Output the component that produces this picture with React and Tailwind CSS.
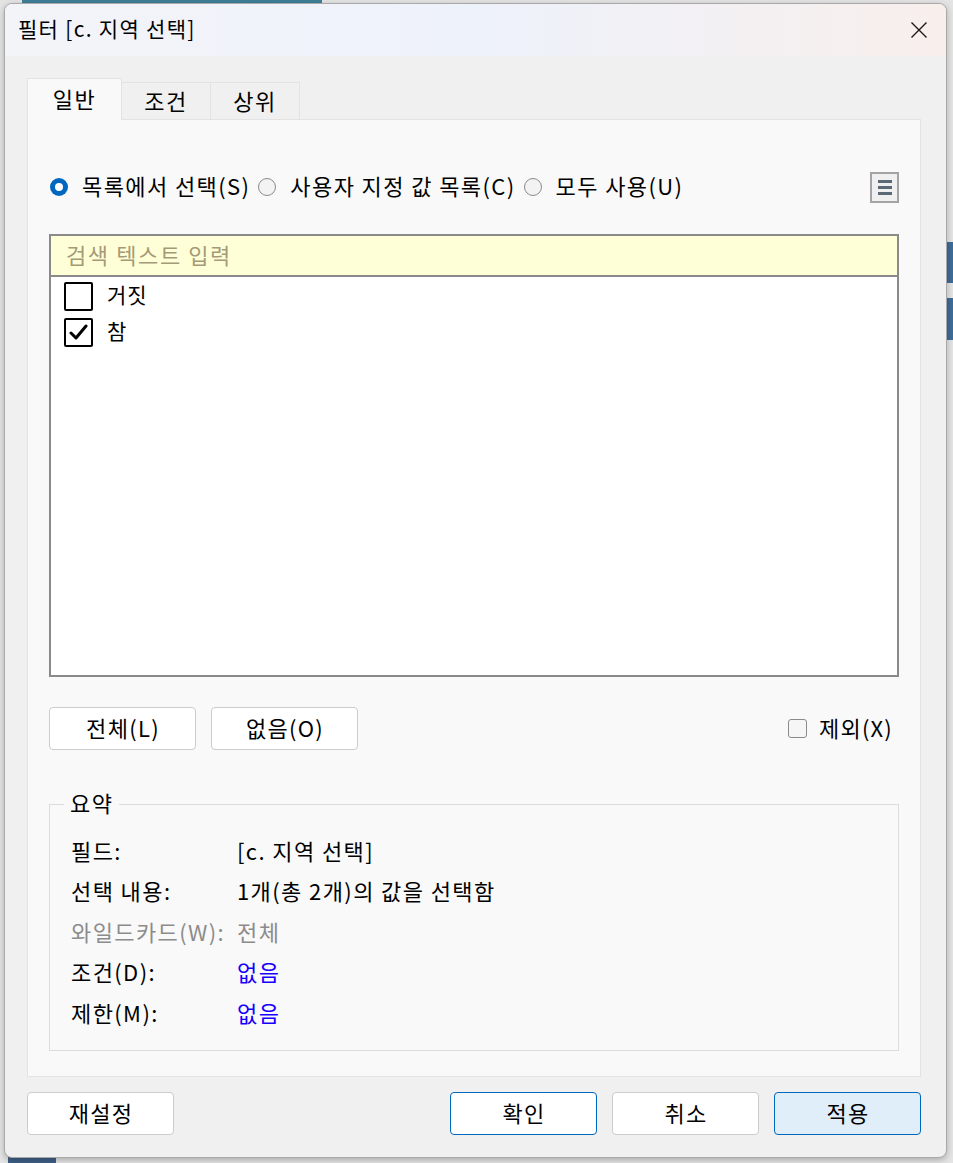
import { useState } from "react";

const FONT = { fontFamily: '"Noto Sans CJK KR", "Noto Sans", sans-serif' };

function Radio({ checked, label }) {
  return (
    <label className="flex items-center">
      {checked ? (
        <span className="flex h-[18px] w-[18px] items-center justify-center rounded-full bg-[#0067c0]">
          <span className="h-[8px] w-[8px] rounded-full bg-white" />
        </span>
      ) : (
        <span className="h-[18px] w-[18px] rounded-full border border-[#8a8a8a] bg-[#f3f3f3]" />
      )}
      <span className="-mt-[3px] ml-[14px] mr-[8px] text-[22px] tracking-[1.4px] text-black">{label}</span>
    </label>
  );
}

function ListCheck({ checked, label }) {
  return (
    <div className="flex h-[36px] items-center pl-[13px]">
      <span className="flex h-[29px] w-[29px] items-center justify-center rounded-[2px] border-2 border-black bg-white">
        {checked ? (
          <svg width="19" height="17" viewBox="0 0 19 17">
            <path d="M2 9 L7 14 L17 2" fill="none" stroke="black" strokeWidth="3" strokeLinecap="round" strokeLinejoin="round" />
          </svg>
        ) : null}
      </span>
      <span className="-mt-[2px] ml-[14px] text-[21px] tracking-[1px] text-black">{label}</span>
    </div>
  );
}

function Btn({ children, primary, active, className = "" }) {
  let cls = "border-[#cccccc] bg-white";
  if (primary) cls = "border-[#0067c0] bg-white";
  if (active) cls = "border-[#0067c0] bg-[#e0eef9]";
  return (
    <button
      type="button"
      className={`flex h-[43px] w-[147px] items-center justify-center rounded-[4px] border pb-[3px] pl-[1px] text-[22px] tracking-[1.3px] text-black ${cls} ${className}`}
    >
      {children}
    </button>
  );
}

const ROWS = [
  { label: "필드:", value: "[c. 지역 선택]", tone: "text-black", vtone: "text-black" },
  { label: "선택 내용:", value: "1개(총 2개)의 값을 선택함", tone: "text-black", vtone: "text-black" },
  { label: "와일드카드(W):", value: "전체", tone: "text-[#8c8c8c]", vtone: "text-[#8c8c8c]" },
  { label: "조건(D):", value: "없음", tone: "text-black", vtone: "text-[#1500ff]" },
  { label: "제한(M):", value: "없음", tone: "text-black", vtone: "text-[#1500ff]" },
];

export default function App() {
  const [tab, setTab] = useState("일반");
  const tabs = ["일반", "조건", "상위"];

  return (
    <div style={FONT} className="relative h-[1163px] w-[953px] overflow-hidden bg-[#e4e4e4]">
      {/* desktop bits behind the dialog */}
      <div className="absolute left-[22px] top-0 h-[4px] w-[300px] bg-[#3f7f98]" />
      <div className="absolute right-0 top-[242px] h-[41px] w-[6px] bg-[#3e6b99]" />
      <div className="absolute right-0 top-[298px] h-[42px] w-[6px] bg-[#3e6b99]" />
      <div className="absolute bottom-0 left-[8px] h-[6px] w-[48px] bg-[#3e5f86]" />

      <div className="relative ml-[4px] mt-[3px] flex h-[1155px] w-[943px] flex-col overflow-hidden rounded-[8px] border border-[#a9a9a9] bg-[#f0f0f0] shadow-[0_2px_6px_rgba(0,0,0,0.25)]">
        {/* title bar */}
        <div className="flex h-[52px] items-center justify-between bg-gradient-to-r from-[#f3f4f8] via-[#eef2fb] to-[#f8efec] pl-[13px] pr-[18px]">
          <span className="-mt-[2px] text-[21px] tracking-[1.3px] text-black">필터 [c. 지역 선택]</span>
          <svg width="18" height="18" viewBox="0 0 18 18">
            <path d="M1.5 1.5 L16.5 16.5 M16.5 1.5 L1.5 16.5" stroke="#1a1a1a" strokeWidth="1.4" />
          </svg>
        </div>

        <div className="flex flex-1 flex-col pl-[22px] pr-[25px] pt-[22px]">
          {/* tabs */}
          <div className="flex h-[41px] items-end">
            {tabs.map((t) => (
              <button
                key={t}
                type="button"
                onClick={() => setTab(t)}
                className={
                  t === tab
                    ? "relative z-10 -mb-px h-[42px] w-[95px] border border-b-0 border-[#e3e3e3] bg-[#f9f9f9] pb-[2px] text-[22px] tracking-[1.4px] text-black"
                    : "h-[37px] w-[89px] border border-l-0 border-b-0 border-[#e3e3e3] bg-[#f0f0f0] pb-[2px] text-[22px] tracking-[1.4px] text-black"
                }
              >
                {t}
              </button>
            ))}
          </div>

          {/* panel */}
          <div className="flex h-[958px] flex-col border border-[#e3e3e3] bg-[#f9f9f9] px-[21px] pt-[51px]">
            <div className="flex h-[32px] items-center">
              <div className="ml-[1px] flex items-center">
                <Radio checked label="목록에서 선택(S)" />
                <Radio label="사용자 지정 값 목록(C)" />
                <Radio label="모두 사용(U)" />
              </div>
              <div className="ml-auto flex h-[31px] w-[29px] flex-col items-center justify-center gap-[3px] border-2 border-[#a3a3a3] bg-[#f0f0f0]">
                <span className="h-[3px] w-[14px] bg-[#5d6977]" />
                <span className="h-[3px] w-[14px] bg-[#5d6977]" />
                <span className="h-[3px] w-[14px] bg-[#5d6977]" />
              </div>
            </div>

            {/* list box */}
            <div className="mt-[31px] flex h-[443px] flex-col border-2 border-[#8a8a8a] bg-white">
              <div className="flex h-[41px] items-center border-b-2 border-[#8a8a8a] bg-[#ffffd7] pb-[3px] pl-[15px] text-[22px] tracking-[1.6px] text-[#a59a78]">
                검색 텍스트 입력
              </div>
              <div className="pt-[1px]">
                <ListCheck label="거짓" />
                <ListCheck checked label="참" />
              </div>
            </div>

            {/* buttons row */}
            <div className="mt-[30px] flex items-center">
              <Btn>전체(L)</Btn>
              <Btn className="ml-[15px]">없음(O)</Btn>
              <label className="ml-auto mr-[6px] flex items-center">
                <span className="h-[19px] w-[19px] rounded-[3px] border border-[#8a8a8a] bg-[#f6f6f6]" />
                <span className="-mt-[3px] ml-[12px] text-[22px] tracking-[1.2px] text-black">제외(X)</span>
              </label>
            </div>

            {/* summary */}
            <div className="relative mt-[54px] h-[247px] border border-[#dcdcdc] pl-[21px] pt-[25px]">
              <span className="absolute -top-[17px] left-[14px] bg-[#f9f9f9] px-[6px] text-[22px] leading-[28px] tracking-[1.4px] text-black">
                요약
              </span>
              {ROWS.map((r) => (
                <div key={r.label} className="flex h-[40.5px] items-center text-[22px] tracking-[1.4px]">
                  <span className={`w-[166px] ${r.tone}`}>{r.label}</span>
                  <span className={r.vtone}>{r.value}</span>
                </div>
              ))}
            </div>
          </div>

          {/* footer */}
          <div className="mt-[15px] flex items-center">
            <Btn>재설정</Btn>
            <div className="ml-auto flex gap-[15px]">
              <Btn primary>확인</Btn>
              <Btn>취소</Btn>
              <Btn active>적용</Btn>
            </div>
          </div>
        </div>
      </div>
    </div>
  );
}
